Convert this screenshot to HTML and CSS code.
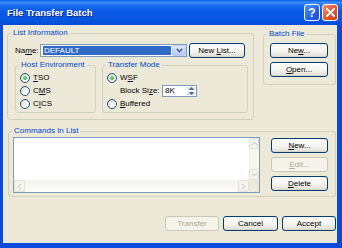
FILE: index.html
```html
<!DOCTYPE html>
<html lang="en">
<head>
  <meta charset="UTF-8" />
  <title>File Transfer Batch</title>
  <link rel="stylesheet" href="styles.css">
</head>
<body>
  <div class="window">
    <div class="titlebar">
      <span class="title">File Transfer Batch</span>
      <div class="title-buttons">
        <span class="tbtn help">?</span>
        <span class="tbtn close">
          <svg width="9" height="9" viewBox="0 0 9 9"><path d="M1 1 L8 8 M8 1 L1 8" stroke="#fff" stroke-width="1.8" stroke-linecap="round"/></svg>
        </span>
      </div>
    </div>

    <div class="client">
      <div class="top-row">
        <fieldset class="group list-info">
          <legend>List Information</legend>
          <div class="list-body">
            <div class="name-row">
              <label class="name-label">Na<u>m</u>e:</label>
              <div class="combo">
                <span class="combo-value">DEFAULT</span>
                <span class="combo-btn">
                  <svg width="7" height="5" viewBox="0 0 7 5"><path d="M0.8 0.8 L3.5 3.6 L6.2 0.8" fill="none" stroke="#4D6185" stroke-width="1.5"/></svg>
                </span>
              </div>
              <button class="btn new-list">New <u>L</u>ist...</button>
            </div>

            <div class="sub-row">
              <fieldset class="group host-env">
                <legend>Host Environment</legend>
                <div class="radio-list">
                  <label class="radio-row"><input type="radio" name="host" checked><span><u>T</u>SO</span></label>
                  <label class="radio-row"><input type="radio" name="host"><span>C<u>M</u>S</span></label>
                  <label class="radio-row"><input type="radio" name="host"><span>C<u>I</u>CS</span></label>
                </div>
              </fieldset>

              <fieldset class="group transfer-mode">
                <legend>Transfer Mode</legend>
                <div class="radio-list">
                  <label class="radio-row"><input type="radio" name="mode" checked><span>W<u>S</u>F</span></label>
                  <div class="block-row">
                    <span class="block-label">Block Si<u>z</u>e:</span>
                    <div class="spin">
                      <span class="spin-value">8K</span>
                      <span class="spin-btns">
                        <span class="spin-btn"><svg width="5" height="3" viewBox="0 0 5 3"><path d="M0 3 L2.5 0 L5 3Z" fill="#4D6185"/></svg></span>
                        <span class="spin-btn"><svg width="5" height="3" viewBox="0 0 5 3"><path d="M0 0 L2.5 3 L5 0Z" fill="#4D6185"/></svg></span>
                      </span>
                    </div>
                  </div>
                  <label class="radio-row"><input type="radio" name="mode"><span><u>B</u>uffered</span></label>
                </div>
              </fieldset>
            </div>
          </div>
        </fieldset>

        <fieldset class="group batch-file">
          <legend>Batch File</legend>
          <div class="batch-body">
            <button class="btn">Ne<u>w</u>...</button>
            <button class="btn"><u>O</u>pen...</button>
          </div>
        </fieldset>
      </div>

      <fieldset class="group commands">
        <legend>Commands In List</legend>
        <div class="cmd-body">
          <div class="listbox">
            <div class="list-area"></div>
            <div class="vscroll">
              <span class="sb-btn"><svg width="5" height="3" viewBox="0 0 5 3"><path d="M0 3 L2.5 0 L5 3" fill="none" stroke="#C4C3BA" stroke-width="1"/></svg></span>
              <span class="sb-track"></span>
              <span class="sb-btn"><svg width="5" height="3" viewBox="0 0 5 3"><path d="M0 0 L2.5 3 L5 0" fill="none" stroke="#C4C3BA" stroke-width="1"/></svg></span>
            </div>
            <div class="hscroll">
              <span class="sb-btn"><svg width="3" height="5" viewBox="0 0 3 5"><path d="M3 0 L0 2.5 L3 5" fill="none" stroke="#C4C3BA" stroke-width="1"/></svg></span>
              <span class="sb-track"></span>
              <span class="sb-btn"><svg width="3" height="5" viewBox="0 0 3 5"><path d="M0 0 L3 2.5 L0 5" fill="none" stroke="#C4C3BA" stroke-width="1"/></svg></span>
            </div>
            <div class="sb-corner"></div>
          </div>
          <div class="cmd-buttons">
            <button class="btn"><u>N</u>ew...</button>
            <button class="btn" disabled><u>E</u>dit...</button>
            <button class="btn"><u>D</u>elete</button>
          </div>
        </div>
      </fieldset>

      <div class="footer">
        <button class="btn wide-54" disabled>Transfer</button>
        <button class="btn wide-55">Cancel</button>
        <button class="btn wide-54">Accept</button>
      </div>
    </div>
  </div>
</body>
</html>
```

FILE: styles.css
```css
body {
  margin: 0;
  font-family: "Liberation Sans", Arial, sans-serif;
  font-size: 8px;
  color: #000;
}

.window {
  width: 342px;
  height: 248px;
  background: #0B4BDB;
  display: flex;
  flex-direction: column;
}

.titlebar {
  height: 25px;
  display: flex;
  align-items: center;
  padding: 0 4px 0 7px;
  background: linear-gradient(to bottom, #0A5CE6 0%, #3D8DF8 10%, #1C6CF2 22%, #0A58E6 45%, #0656E2 80%, #0349D4 100%);
  color: #fff;
}

.title {
  flex: 1;
  font-weight: bold;
  font-size: 9.5px;
  text-shadow: 1px 1px #0A2A9C;
}

.title-buttons {
  display: flex;
  gap: 2px;
}

.tbtn {
  width: 14px;
  height: 15px;
  border: 1px solid #fff;
  border-radius: 3px;
  display: flex;
  align-items: center;
  justify-content: center;
  color: #fff;
  font-weight: bold;
  font-size: 12px;
}

.help {
  background: linear-gradient(135deg, #5A94FF, #2260E8 60%, #1A4FD0);
}

.close {
  background: linear-gradient(135deg, #F0906C, #E2582F 55%, #C9401C);
}

.client {
  flex: 1;
  margin: 0 5px 5px 3px;
  background: #ECE9D8;
  padding-top: 3px;
}

.group {
  border: 1px solid #D0D0BF;
  border-radius: 3px;
  margin: 0;
  padding: 0;
  min-width: 0;
  box-sizing: border-box;
}

.group legend {
  color: #0046D5;
  padding: 0 2px;
  margin-left: 3px;
  line-height: 10px;
}

.top-row {
  display: flex;
  align-items: flex-start;
  gap: 9px;
  padding-left: 4px;
}

.list-info {
  width: 247px;
}

.list-body {
  padding: 5px 5px 6px 7px;
}

.name-row {
  display: flex;
  align-items: center;
  height: 15px;
}

.name-label {
  width: 25px;
}

.combo {
  width: 147px;
  height: 13px;
  box-sizing: border-box;
  border: 1px solid #7F9DB9;
  background: #fff;
  display: flex;
}

.combo-value {
  flex: 1;
  margin: 1px 1px 1px 2px;
  background: #316AC5;
  color: #fff;
  padding-left: 1px;
  line-height: 9px;
}

.combo-btn {
  width: 14px;
  box-sizing: border-box;
  border: 1px solid #B9CDF6;
  border-radius: 2px;
  background: linear-gradient(to bottom, #E1EAFE, #C1D3FB 60%, #B4C8F6);
  display: flex;
  align-items: center;
  justify-content: center;
}

.btn {
  height: 15px;
  box-sizing: border-box;
  border: 1px solid #003C74;
  border-radius: 3px;
  background: linear-gradient(to bottom, #FFFFFF 0%, #F5F4EF 55%, #E6E3DA 88%, #D6D0C5 100%);
  font-family: inherit;
  font-size: 8px;
  color: #000;
  padding: 0;
}

.btn:disabled {
  border-color: #C9C7BA;
  background: #F5F4EA;
  color: #ACA899;
}

.new-list {
  width: 56px;
  margin-left: 2px;
}

.sub-row {
  display: flex;
  gap: 6px;
  margin-top: 2px;
}

.host-env {
  width: 81px;
}

.transfer-mode {
  width: 146px;
}

.radio-list {
  padding: 1px 0 2px 4px;
}

.radio-row {
  display: flex;
  align-items: center;
  height: 13px;
}

.radio-row input {
  appearance: none;
  width: 10px;
  height: 10px;
  margin: 0 3px 0 0;
  border: 1px solid #1C5180;
  border-radius: 50%;
  background: linear-gradient(135deg, #DCDCD5, #FFFFFF 80%);
  box-sizing: border-box;
  display: flex;
  align-items: center;
  justify-content: center;
}

.radio-row input:checked::after {
  content: "";
  width: 4px;
  height: 4px;
  border-radius: 50%;
  background: radial-gradient(circle at 35% 35%, #7BE07B, #21A121);
}

.block-row {
  display: flex;
  align-items: center;
  height: 13px;
  padding-left: 13px;
}

.block-label {
  width: 42px;
}

.spin {
  width: 35px;
  height: 12px;
  box-sizing: border-box;
  border: 1px solid #7F9DB9;
  background: #fff;
  display: flex;
}

.spin-value {
  flex: 1;
  padding-left: 2px;
  line-height: 10px;
}

.spin-btns {
  width: 10px;
  display: flex;
  flex-direction: column;
}

.spin-btn {
  flex: 1;
  background: linear-gradient(to bottom, #E1EAFE, #C1D3FB);
  border: 1px solid #fff;
  border-radius: 2px;
  display: flex;
  align-items: center;
  justify-content: center;
}

.batch-file {
  width: 73px;
  margin-top: 1px;
}

.batch-body {
  display: flex;
  flex-direction: column;
  gap: 4px;
  padding: 4px 0 7px 6px;
}

.batch-body .btn {
  width: 58px;
}

.commands {
  width: 328px;
  margin: 6px 0 0 5px;
}

.cmd-body {
  display: flex;
  padding: 1px 0 3px 4px;
}

.listbox {
  width: 247px;
  height: 56px;
  box-sizing: border-box;
  border: 1px solid #7F9DB9;
  display: grid;
  grid-template-columns: 1fr 10px;
  grid-template-rows: 1fr 12px;
  background: #fff;
}

.vscroll {
  display: flex;
  flex-direction: column;
  background: #F7F7F1;
}

.hscroll {
  display: flex;
  background: linear-gradient(to bottom, #F3F2EC, #FDFDFA);
}

.sb-btn {
  flex: 0 0 11px;
  box-sizing: border-box;
  border: 1px solid #E3E2DA;
  border-radius: 2px;
  background: #F4F3EE;
  display: flex;
  align-items: center;
  justify-content: center;
}

.sb-track {
  flex: 1;
}

.sb-corner {
  background: #ECE9D8;
}

.cmd-buttons {
  display: flex;
  flex-direction: column;
  gap: 4px;
  margin-left: 11px;
  padding-top: 1px;
}

.cmd-buttons .btn {
  width: 57px;
}

.footer {
  display: flex;
  justify-content: flex-end;
  gap: 4px;
  margin-top: 19px;
  padding-right: 1px;
}

.wide-54 {
  width: 54px;
}

.wide-55 {
  width: 55px;
}
```
